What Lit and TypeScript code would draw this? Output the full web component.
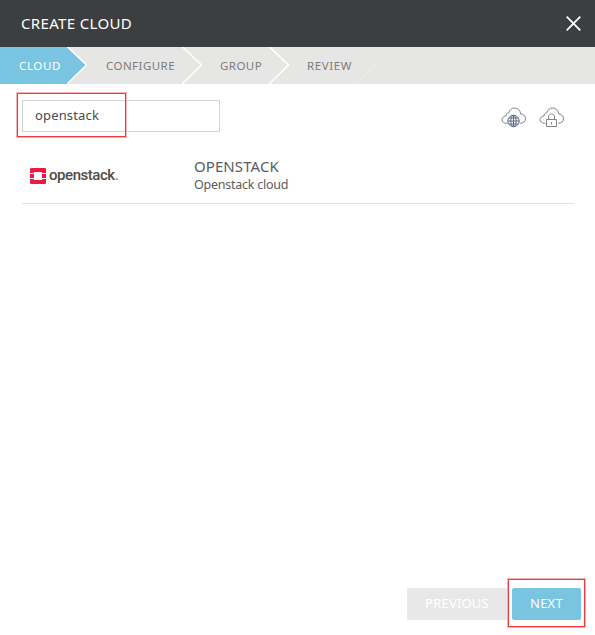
import { LitElement, html, css } from "lit";
import { customElement, state } from "lit/decorators.js";
import { classMap } from "lit/directives/class-map.js";

const cloudOutline = "M6.5 16.3H5.5C2.8 16 1 14.8 1 12.6C1 10.7 2.7 9.2 5 9C5 7.2 6 6 7.8 5.8C8.7 2.9 10.6 1 13.4 1C16.9 1 19.4 3.4 19.6 6.9C22.6 7.2 24.5 9 24.5 11.8C24.5 14.5 22.5 16.1 19.7 16.3H19";

@customElement("step-bar")
class StepBar extends LitElement {
  static styles = css`
    :host { display: block; height: 37px; background: #e6e6e5; }
    .steps { display: flex; height: 37px; }
    .step { display: flex; position: relative; box-sizing: border-box; height: 37px; align-items: center; padding-left: 19px; width: 87px; font-size: 11.5px; color: #7c7c7c; }
    .step.active { background: #79c4e0; color: #fff; width: 67px; margin-right: 20px; }
    .step.configure { width: 114px; }
    .chevron { position: absolute; left: 100%; top: 0; width: 22px; height: 37px; }
    .step:not(.active) .chevron { left: calc(100% - 19px); }
    .line { fill: none; stroke: #fff; stroke-width: 1.6; }
    .active .line { fill: #79c4e0; }
    .last .line { stroke: #efefee; stroke-width: 0.8; }
    .label { white-space: nowrap; padding-bottom: 1px; letter-spacing: 0.45px; }
    .cloud .label { letter-spacing: 0.65px; }
    .review .label { letter-spacing: 0.6px; }
  `;
  @state() private steps = ["CLOUD", "CONFIGURE", "GROUP", "REVIEW"];
  render() {
    return html`<div class="steps">${this.steps.map((name, i) => html`
      <div class=${classMap({ step: true, active: i === 0, last: i === 3, [name.toLowerCase()]: true })}>
        <span class="label">${name}</span>
        <svg class="chevron" viewBox="0 0 22 37"><path class="line" d="M0 -.5L19.5 18L0 37"/></svg>
      </div>`)}</div>`;
  }
}

@customElement("app-root")
class AppRoot extends LitElement {
  static styles = css`
    :host { display: block; font-family: "Noto Sans", sans-serif; }
    .dialog { display: flex; flex-direction: column; position: relative; width: 595px; height: 635px; background: #fff; overflow: hidden; }
    header { display: flex; box-sizing: border-box; height: 47px; flex: none; align-items: center; justify-content: space-between; padding: 0 14px 0 21px; background: #3d3e40; color: #fff; }
    .title { font-size: 15px; font-weight: 400; margin: 0; padding-bottom: 2px; letter-spacing: 0.35px; }
    .close { width: 15px; height: 15px; stroke: #fff; stroke-width: 1.8; }
    .toolbar { display: flex; justify-content: space-between; padding: 16px 30px 0 22px; }
    .search { box-sizing: border-box; width: 198px; height: 32px; border: 1px solid #d4d4d4; padding: 0 12px 2px; margin: 0; background: transparent; color: #4a4b4d; font: 13px "Noto Sans", sans-serif; letter-spacing: 0.15px; outline: 0; border-radius: 0; }
    .filters { display: flex; gap: 12px; padding-top: 7px; }
    .filter { width: 26px; height: 21px; fill: none; stroke: #808286; stroke-width: 1; }
    .globe { stroke: #5c6c82; }
    .row { display: flex; box-sizing: border-box; height: 72px; margin: 0 21px 0 22px; padding-top: 23px; border-bottom: 1px solid #e3e3e3; }
    .logo { display: flex; box-sizing: border-box; width: 172px; padding: 13px 0 0 8px; color: #524b48; }
    .mark { width: 16px; height: 16px; margin-right: 3px; fill: #ed1944; }
    .wordmark { font: 500 15px/14px Roboto, sans-serif; letter-spacing: -0.45px; }
    .dot { color: #9b9694; }
    .name { font-size: 15px; line-height: 18px; padding-top: 2px; letter-spacing: 0.08px; color: #5a5c60; }
    .desc { font-size: 12.5px; line-height: 18px; padding-top: 1px; letter-spacing: -0.25px; color: #5a5c60; }
    .actions { display: flex; gap: 5px; margin: auto 14px 15px auto; }
    .button { border: 0; padding: 0 0 2px; height: 32px; border-radius: 2px; color: #fff; font: 13px "Noto Sans", sans-serif; letter-spacing: 0.2px; }
    .previous { width: 100px; background: #e9e8e9; }
    .next { width: 69px; background: #79c4e0; }
    .mark-box { position: absolute; box-sizing: border-box; border: 1px solid #ef3b3b; outline: 0.5px solid #f9b0b0; pointer-events: none; }
    .search-box { left: 17px; top: 93px; width: 109px; height: 44px; }
    .next-box { left: 508px; top: 579px; width: 77px; height: 48px; }
  `;
  render() {
    return html`<div class="dialog">
      <header><h1 class="title">CREATE CLOUD</h1>
        <svg class="close" viewBox="0 0 15 15"><path d="M.7 .7L14.3 14.3M14.3 .7L.7 14.3"/></svg></header>
      <step-bar></step-bar>
      <div class="toolbar">
        <input class="search" .value=${"openstack"}>
        <div class="filters">
          <svg class="filter" viewBox="0 0 26 21"><path d=${cloudOutline}/><g class="globe"><circle cx="12.5" cy="14" r="5.7"/><ellipse cx="12.5" cy="14" rx="2.7" ry="5.7"/><path d="M12.5 8.3V19.7M6.8 14H18.2M7.8 11H17.2M7.8 17H17.2"/></g></svg>
          <svg class="filter" viewBox="0 0 26 21"><path d=${cloudOutline}/><path d="M7.5 12.5H17.5V19.5H7.5ZM9.5 12.5V10C9.5 6 15.5 6 15.5 10V12.5M12.5 15V17.5"/></svg>
        </div>
      </div>
      <div class="row">
        <div class="logo"><svg class="mark" viewBox="0 0 16 16"><path d="M1.2 0H14.8Q16 0 16 1.2V5H12V4H4V5H0V1.2Q0 0 1.2 0ZM0 6H4V10H0ZM12 6H16V10H12ZM0 11H4V12H12V11H16V14.8Q16 16 14.8 16H1.2Q0 16 0 14.8Z"/></svg><span class="wordmark">openstack<span class="dot">.</span></span></div>
        <div><div class="name">OPENSTACK</div><div class="desc">Openstack cloud</div></div>
      </div>
      <div class="actions"><button class="button previous">PREVIOUS</button><button class="button next">NEXT</button></div>
      <div class="mark-box search-box"></div><div class="mark-box next-box"></div>
    </div>`;
  }
}
